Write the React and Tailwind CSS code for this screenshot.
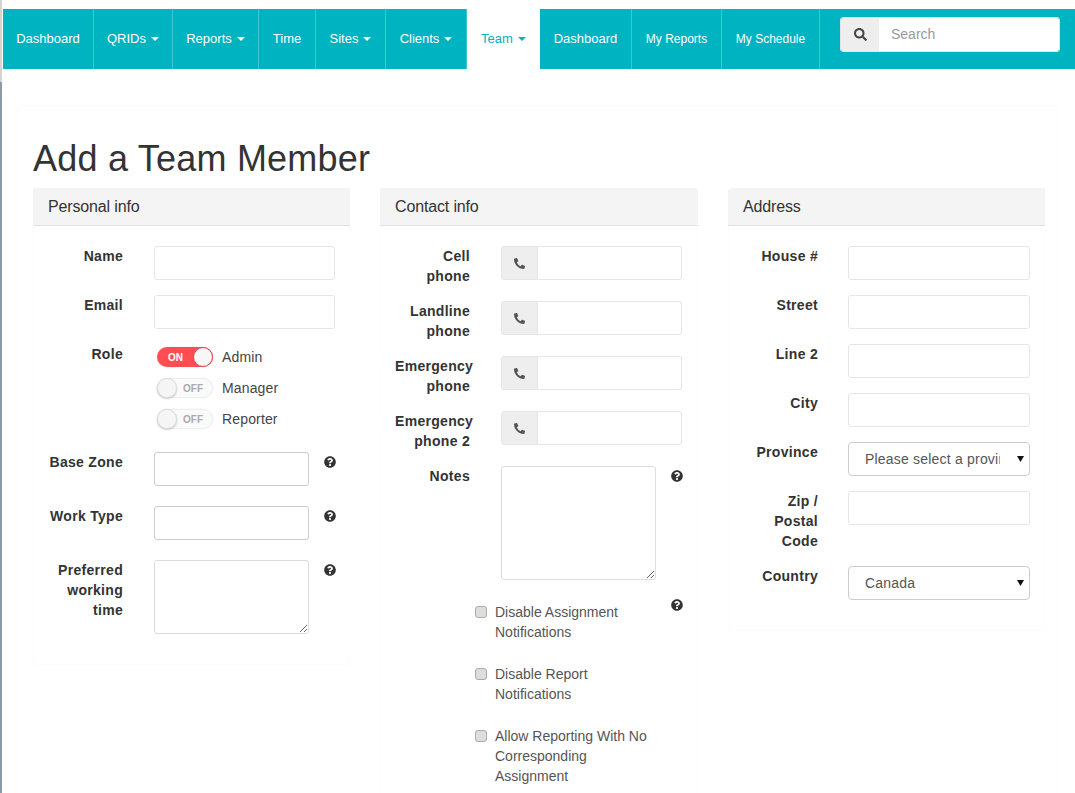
import { FaSearch, FaPhoneAlt, FaQuestionCircle } from 'react-icons/fa';

const navLeft = [
  { label: 'Dashboard', w: 'w-[91px]' },
  { label: 'QRIDs', w: 'w-[79px]', caret: true },
  { label: 'Reports', w: 'w-[86px]', caret: true },
  { label: 'Time', w: 'w-[57px]' },
  { label: 'Sites', w: 'w-[70px]', caret: true },
  { label: 'Clients', w: 'w-[81px]', caret: true },
];

const navRight = [
  { label: 'Dashboard', w: 'w-[92px]' },
  { label: 'My Reports', w: 'w-[90px]', small: true },
  { label: 'My Schedule', w: 'w-[98px]', small: true },
];

function Caret() {
  return <span className="ml-[5px] inline-block h-0 w-0 border-x-4 border-t-4 border-x-transparent border-t-current align-middle" />;
}

function NavItem({ item }) {
  return (
    <a href="#" className={`flex h-full items-center justify-center border-r border-white/25 text-white ${item.w} ${item.small ? 'text-[12px]' : 'text-[13px]'}`}>
      {item.label}
      {item.caret && <Caret />}
    </a>
  );
}

function Panel({ title, w = 'w-[317px]', children }) {
  return (
    <section className={`shrink-0 ${w}`}>
      <div className="rounded-[3px] border border-[#fcfcfc]">
        <h2 className="-m-px flex h-[38px] items-center rounded-t-[3px] border-b border-[#e0e0e0] bg-[#f4f4f4] px-[15px] text-[16px] tracking-[-0.15px] text-[#333]">{title}</h2>
        <div className="pb-[15px] pt-[21px]">{children}</div>
      </div>
    </section>
  );
}

function Row({ label, children, help, mb = 'mb-[15px]', gap = 'ml-[31px]' }) {
  return (
    <div className={`flex ${mb}`}>
      <label className="ml-[14px] w-[75px] shrink-0 text-right text-[14px] font-bold leading-[20px] tracking-[0.3px] text-[#333]">{label}</label>
      <div className={`relative min-w-0 flex-1 ${gap}`}>
        {children}
        {help && <FaQuestionCircle className="absolute left-[170px] top-[4px] text-[12px] text-[#333]" />}
      </div>
    </div>
  );
}

function TextInput({ w = 'w-[181px]', dark }) {
  return <input className={`block h-[34px] rounded-[3px] border bg-white ${w} ${dark ? 'border-[#ccc]' : 'border-[#e6e6ea]'}`} />;
}

function PhoneInput() {
  return (
    <div className="flex h-[34px] w-[181px]">
      <span className="flex w-[37px] items-center justify-center rounded-l-[3px] border border-[#e6e6ea] bg-[#eee] text-[11px] text-[#555]">
        <FaPhoneAlt />
      </span>
      <input className="h-full min-w-0 flex-1 rounded-r-[3px] border border-l-0 border-[#e6e6ea] bg-white" />
    </div>
  );
}

function Toggle({ on, label }) {
  return (
    <div className="mb-[11px] flex h-[20px] items-center pl-[3px]">
      {on ? (
        <span className="flex h-[20px] w-[56px] items-center justify-between rounded-full bg-[#ff4d52] pl-[11px] text-[10px] font-bold text-white shadow-[0_0_0_1px_#f7f7f7]">
          ON
          <span className="h-[20px] w-[20px] rounded-full border border-[#e04a4e] bg-[#f7f7f7]" />
        </span>
      ) : (
        <span className="flex h-[20px] w-[56px] items-center justify-between rounded-full border border-[#eee] bg-[#fafafa] pr-[9px] text-[10px] font-bold text-[#aaa] shadow-[0_0_0_1px_#fafafa]">
          <span className="-ml-px h-[20px] w-[20px] rounded-full border border-[#ddd] bg-[#f5f5f5] shadow-[0_1px_2px_rgba(0,0,0,0.2)]" />
          OFF
        </span>
      )}
      <span className="ml-[9px] text-[14px] tracking-[0.15px] text-[#444]">{label}</span>
    </div>
  );
}

function Check({ lines, className }) {
  return (
    <div className={`flex ${className}`}>
      <span className="mt-[4px] h-[12px] w-[12px] shrink-0 rounded-[3px] border border-[#aaa] bg-[#ddd]" />
      <span className="ml-[8px] w-[170px] text-[14px] leading-[20px] text-[#555]">{lines}</span>
    </div>
  );
}

function SelectBox({ value }) {
  return (
    <div className="relative h-[34px] w-[182px]">
      <select defaultValue={value} className="h-full w-full appearance-none rounded-[4px] border border-[#ccc] bg-white pl-[16px] pr-[29px] text-[14px] tracking-[0.2px] text-[#555]">
        <option>{value}</option>
      </select>
      <svg className="pointer-events-none absolute left-[169px] top-[14px]" width="7" height="6" viewBox="0 0 7 6">
        <polygon points="0,0 7,0 3.5,6" fill="#111" />
      </svg>
    </div>
  );
}

export default function App() {
  return (
    <div className="relative h-[793px] w-[1075px] overflow-hidden bg-white font-['Liberation_Sans',Arial,sans-serif]">
      {/* window edge */}
      <div className="absolute left-0 top-0 h-[82px] w-[2px] bg-[#d4d4d4]" />
      <div className="absolute left-0 top-[82px] h-[711px] w-[2px] bg-[#8d9aa8]" />

      <div className="pl-[3px] pt-[9px]">
        <nav className="flex h-[60px] items-stretch bg-[#00b3c1]">
          {navLeft.map((item) => <NavItem key={item.label} item={item} />)}
          <a href="#" className="flex h-full w-[73px] items-center justify-center bg-white text-[13px] text-[#00b3c1]">
            Team
            <Caret />
          </a>
          {navRight.map((item) => <NavItem key={item.label} item={item} />)}
          <div className="ml-[20px] mt-[8px] flex h-[35px] w-[220px] overflow-hidden rounded-[3px] border border-[#e6e6ea]">
            <span className="flex w-[38px] items-center justify-center bg-[#eee] text-[13px] text-[#444]">
              <FaSearch />
            </span>
            <input placeholder="Search" className="min-w-0 flex-1 bg-white pl-[12px] text-[14px] placeholder:text-[#999]" />
          </div>
        </nav>
      </div>

      <main className="mx-[17px] mt-[36px] h-[800px] rounded-[3px] border border-[#fcfcfc] px-[15px]">
        <h1 className="mt-[33px] text-[36px] font-normal leading-[40px] tracking-[0.22px] text-[#333]">Add a Team Member</h1>
        <div className="mt-[9px] flex gap-[30px]">
          <Panel title="Personal info">
            <Row label="Name"><TextInput /></Row>
            <Row label="Email"><TextInput /></Row>
            <Row label="Role">
              <div className="h-[93px] pt-[3px]">
                <Toggle on label="Admin" />
                <Toggle label="Manager" />
                <Toggle label="Reporter" />
              </div>
            </Row>
            <Row label="Base Zone" help mb="mb-[20px]"><TextInput w="w-[155px]" dark /></Row>
            <Row label="Work Type" help mb="mb-[20px]"><TextInput w="w-[155px]" dark /></Row>
            <Row label={<>Preferred<br />working<br />time</>} help>
              <textarea className="block h-[74px] w-[155px] rounded-[3px] border border-[#ddd] bg-white" />
            </Row>
          </Panel>

          <Panel title="Contact info" w="w-[318px]">
            <Row label={<>Cell<br />phone</>}><PhoneInput /></Row>
            <Row label={<>Landline<br />phone</>}><PhoneInput /></Row>
            <Row label={<>Emergency<br />phone</>}><PhoneInput /></Row>
            <Row label={<>Emergency<br />phone 2</>}><PhoneInput /></Row>
            <Row label="Notes" help>
              <textarea className="block h-[114px] w-[155px] rounded-[3px] border border-[#ddd] bg-white" />
            </Row>
            <div className="relative ml-[94px] mt-[22px]">
              <FaQuestionCircle className="absolute left-[196px] top-[-3px] text-[12px] text-[#333]" />
              <Check lines={<>Disable Assignment<br />Notifications</>} className="mb-[22px]" />
              <Check lines={<>Disable Report<br />Notifications</>} className="mb-[22px]" />
              <Check lines={<>Allow Reporting With No<br />Corresponding<br />Assignment</>} />
            </div>
          </Panel>

          <Panel title="Address">
            <Row label="House #" gap="ml-[30px]"><TextInput w="w-[182px]" /></Row>
            <Row label="Street" gap="ml-[30px]"><TextInput w="w-[182px]" /></Row>
            <Row label="Line 2" gap="ml-[30px]"><TextInput w="w-[182px]" /></Row>
            <Row label="City" gap="ml-[30px]"><TextInput w="w-[182px]" /></Row>
            <Row label="Province" gap="ml-[30px]"><SelectBox value="Please select a province" /></Row>
            <Row label={<>Zip /<br />Postal<br />Code</>} gap="ml-[30px]"><TextInput w="w-[182px]" /></Row>
            <Row label="Country" gap="ml-[30px]"><SelectBox value="Canada" /></Row>
          </Panel>
        </div>
      </main>
    </div>
  );
}
